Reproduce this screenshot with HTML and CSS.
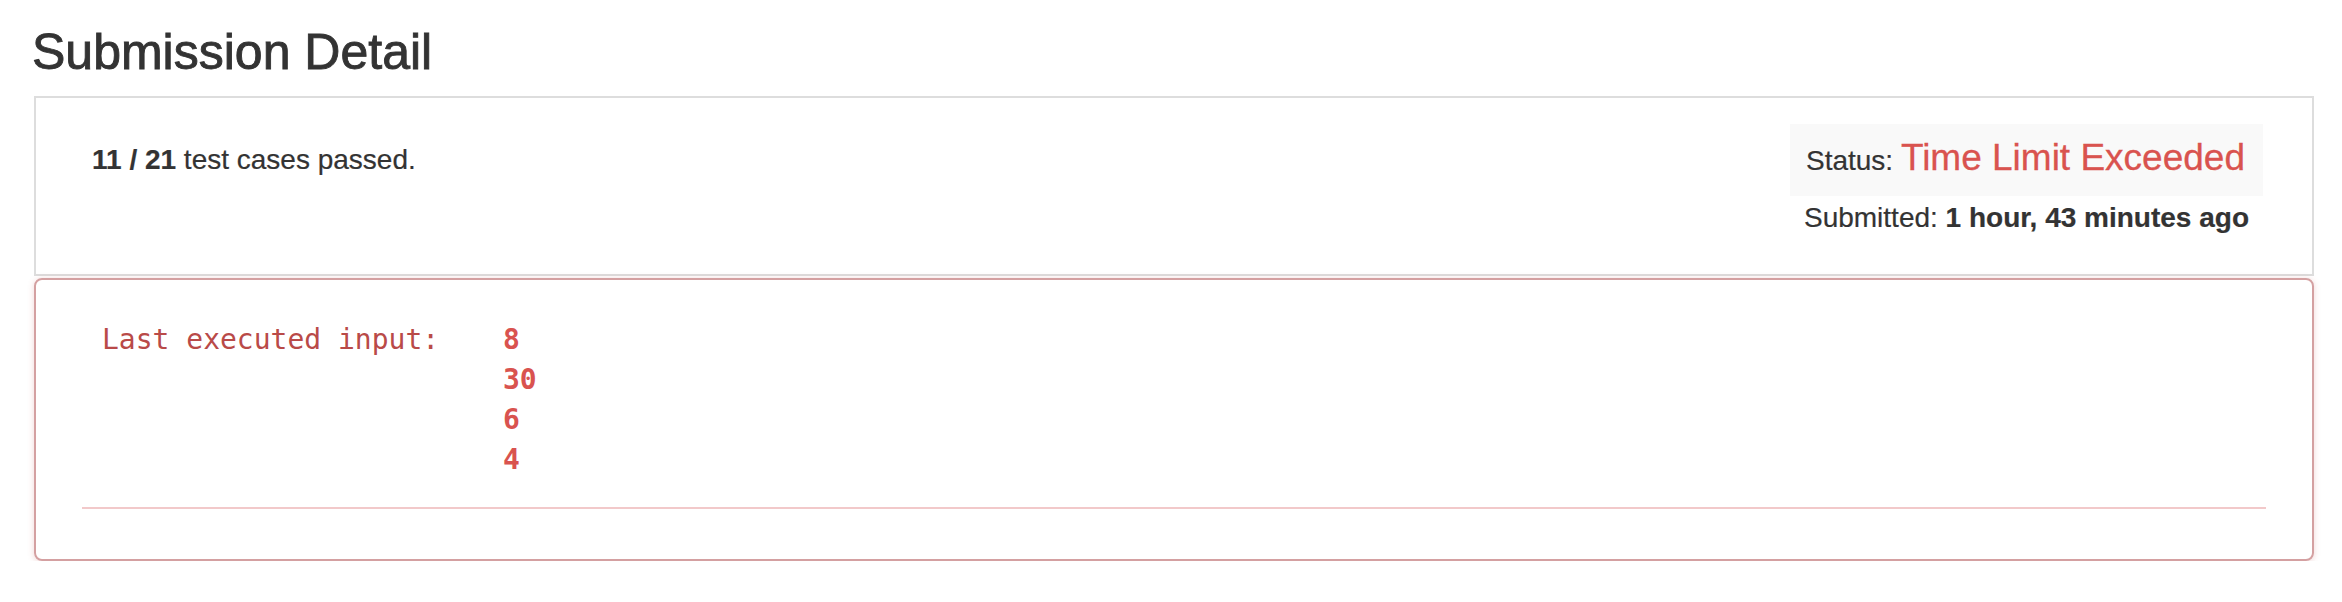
FILE: index.html
```html
<!DOCTYPE html>
<html>
<head>
<meta charset="utf-8">
<title>Submission Detail</title>
<link rel="stylesheet" href="styles.css">
</head>
<body>
<div class="page">
  <h3 class="title">Submission Detail</h3>
  <div class="summary">
    <div class="passed"><b>11 / 21</b> test cases passed.</div>
    <div class="state">
      <div class="status">Status: <span class="status-value">Time Limit Exceeded</span></div>
      <div class="submitted">Submitted: <b>1 hour, 43 minutes ago</b></div>
    </div>
  </div>
  <div class="result">
    <div class="input-block">
      <div class="label">Last executed input:</div>
      <div class="values">
        <div>8</div>
        <div>30</div>
        <div>6</div>
        <div>4</div>
      </div>
    </div>
    <div class="divider"></div>
  </div>
</div>
</body>
</html>
```

FILE: styles.css
```css
html, body {
  margin: 0;
  padding: 0;
  background: #fff;
}

body {
  font-family: "Liberation Sans", Arial, sans-serif;
  color: #333;
  font-size: 28px;
  line-height: 40px;
}

.page {
  padding: 25px 0 0 34px;
  width: 2280px;
}

.title {
  margin: 0 0 16px -2px;
  font-size: 50px;
  line-height: 55px;
  font-weight: normal;
  color: #333;
  -webkit-text-stroke: 0.9px #333;
}

.summary {
  border: 2px solid #ddd;
  display: flex;
  justify-content: space-between;
  align-items: flex-start;
  padding: 26px 49px 36px 56px;
}

.passed {
  padding-top: 16px;
  -webkit-text-stroke: 0.2px #333;
}

.passed b {
  font-weight: bold;
}

.state {
  display: flex;
  flex-direction: column;
  align-items: center;
  -webkit-text-stroke: 0.2px #333;
}

.status {
  background: #f9f9f9;
  padding: 14px 18px 15px 16px;
}

.status-value {
  color: #d9534f;
  font-size: 37px;
  -webkit-text-stroke: 0.3px #d9534f;
}

.submitted {
  margin-top: 2px;
}

.result {
  margin-top: 2px;
  border: 2px solid #d4a0a1;
  border-radius: 8px;
  box-shadow: 0 1px 6px rgba(200, 90, 90, 0.25);
  padding: 40px 46px 50px 46px;
}

.input-block {
  display: flex;
  padding-left: 20px;
  font-family: "DejaVu Sans Mono", "Liberation Mono", monospace;
  font-size: 28px;
  line-height: 40px;
}

.label {
  color: #b94a48;
  width: 401px;
}

.values {
  color: #d9534f;
  font-weight: bold;
}

.divider {
  margin-top: 27px;
  height: 2px;
  background: #f2c9ca;
}
```
